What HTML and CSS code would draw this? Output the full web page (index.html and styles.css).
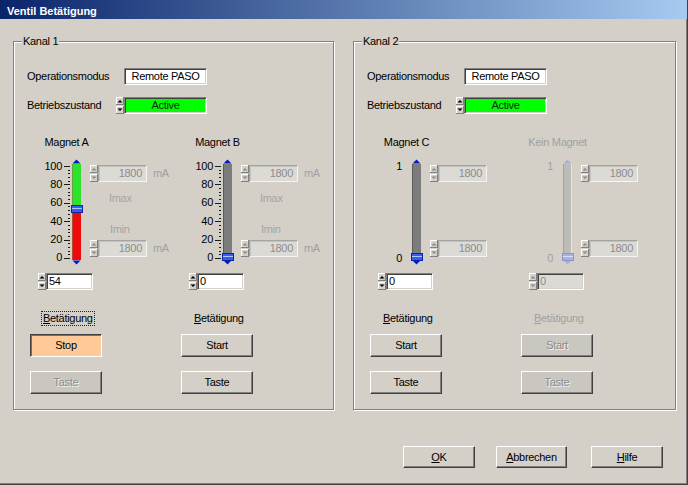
FILE: index.html
```html
<!DOCTYPE html>
<html lang="de">
<head>
<meta charset="utf-8">
<title>Ventil Betätigung</title>
<link rel="stylesheet" href="styles.css">
</head>
<body>
<svg class="defs" width="0" height="0" aria-hidden="true">
  <defs>
    <symbol id="spin" viewBox="0 0 8 17">
      <rect x="0" y="0" width="8" height="8" fill="#d4d0c8"/>
      <rect x="0" y="0" width="8" height="1" fill="#fff"/>
      <rect x="0" y="0" width="1" height="8" fill="#fff"/>
      <rect x="0" y="7" width="8" height="1" fill="#808080"/>
      <rect x="7" y="0" width="1" height="8" fill="#808080"/>
      <polygon points="1.5,5.5 6.5,5.5 4,3" fill="currentColor"/>
      <rect x="0" y="9" width="8" height="8" fill="#d4d0c8"/>
      <rect x="0" y="9" width="8" height="1" fill="#fff"/>
      <rect x="0" y="9" width="1" height="8" fill="#fff"/>
      <rect x="0" y="16" width="8" height="1" fill="#808080"/>
      <rect x="7" y="9" width="1" height="8" fill="#808080"/>
      <polygon points="1.5,11.5 6.5,11.5 4,14" fill="currentColor"/>
    </symbol>
    <symbol id="ticks" viewBox="0 0 21 112">
      <path d="M1 9.5h6M1 27.5h6M1 46.5h6M1 64.5h6M1 83.5h6M1 101.5h6M5 13.5h2M5 16.5h2M5 20.5h2M5 24.5h2M5 31.5h2M5 35.5h2M5 38.5h2M5 42.5h2M5 49.5h2M5 53.5h2M5 57.5h2M5 61.5h2M5 68.5h2M5 72.5h2M5 75.5h2M5 79.5h2M5 86.5h2M5 90.5h2M5 94.5h2M5 97.5h2" stroke="#1a1a1a" fill="none"/>
    </symbol>
  </defs>
</svg>

<div class="window">
  <div class="titlebar">Ventil Betätigung</div>

  <div class="content">
    <!-- Kanal 1 -->
    <div class="group">
      <span class="legend">Kanal 1</span>
      <div class="row r1">
        <span class="lbl">Operationsmodus</span>
        <div class="field box">Remote PASO</div>
      </div>
      <div class="row r2">
        <span class="lbl lbl2">Betriebszustand</span>
        <svg class="spin" width="8" height="17"><use href="#spin"/></svg>
        <div class="field box green">Active</div>
      </div>

      <div class="magnets">
        <div class="magnet">
          <div class="mtitle">Magnet A</div>
          <div class="slider">
            <div class="scale"><span>100</span><span>80</span><span>60</span><span>40</span><span>20</span><span>0</span></div>
            <svg class="track" width="21" height="112" viewBox="0 0 21 112">
              <use href="#ticks"/>
              <rect x="9" y="7" width="9" height="96" fill="#ee0a0a"/>
              <rect x="9" y="7" width="9" height="42" fill="#2ee32e"/>
              <rect x="9" y="7" width="1" height="96" fill="#8a7a4a" opacity=".6"/>
              <polygon points="13.5,2.5 9.5,6.5 17.5,6.5" fill="#0818c8"/>
              <polygon points="9.5,103.5 17.5,103.5 13.5,107.5" fill="#0818c8"/>
              <rect x="8" y="48" width="12" height="8" fill="#0a26a8"/>
              <rect x="9" y="49" width="10" height="6" fill="#3a5cee"/>
              <rect x="9" y="51" width="10" height="1" fill="#b0c4ff"/>
            </svg>
            <div class="limits">
              <div class="spinbox"><svg class="spin dis" width="8" height="17"><use href="#spin"/></svg><div class="lfield">1800</div><span class="unit">mA</span></div>
              <div class="imax">Imax</div>
              <div class="imin">Imin</div>
              <div class="spinbox low"><svg class="spin dis" width="8" height="17"><use href="#spin"/></svg><div class="lfield">1800</div><span class="unit">mA</span></div>
            </div>
          </div>
          <div class="valrow"><svg class="spin" width="8" height="17"><use href="#spin"/></svg><div class="field vfield">54</div></div>
          <div class="act"><span class="focus"><u>B</u>etätigung</span></div>
          <div class="btn pressed">Stop</div>
          <div class="btn dis second">Taste</div>
        </div>

        <div class="magnet">
          <div class="mtitle">Magnet B</div>
          <div class="slider">
            <div class="scale"><span>100</span><span>80</span><span>60</span><span>40</span><span>20</span><span>0</span></div>
            <svg class="track" width="21" height="112" viewBox="0 0 21 112">
              <use href="#ticks"/>
              <rect x="9" y="7" width="9" height="96" fill="#7c7c7c"/>
              <rect x="9" y="7" width="1" height="96" fill="#5a5a5a"/>
              <polygon points="13.5,2.5 9.5,6.5 17.5,6.5" fill="#0818c8"/>
              <polygon points="9.5,103.5 17.5,103.5 13.5,107.5" fill="#0818c8"/>
              <rect x="8" y="96" width="12" height="8" fill="#0a26a8"/>
              <rect x="9" y="97" width="10" height="6" fill="#3a5cee"/>
              <rect x="9" y="99" width="10" height="1" fill="#b0c4ff"/>
            </svg>
            <div class="limits">
              <div class="spinbox"><svg class="spin dis" width="8" height="17"><use href="#spin"/></svg><div class="lfield">1800</div><span class="unit">mA</span></div>
              <div class="imax">Imax</div>
              <div class="imin">Imin</div>
              <div class="spinbox low"><svg class="spin dis" width="8" height="17"><use href="#spin"/></svg><div class="lfield">1800</div><span class="unit">mA</span></div>
            </div>
          </div>
          <div class="valrow"><svg class="spin" width="8" height="17"><use href="#spin"/></svg><div class="field vfield">0</div></div>
          <div class="act"><span><u>B</u>etätigung</span></div>
          <div class="btn">Start</div>
          <div class="btn second">Taste</div>
        </div>
      </div>
    </div>

    <!-- Kanal 2 -->
    <div class="group g2">
      <span class="legend">Kanal 2</span>
      <div class="row r1">
        <span class="lbl">Operationsmodus</span>
        <div class="field box">Remote PASO</div>
      </div>
      <div class="row r2">
        <span class="lbl lbl2">Betriebszustand</span>
        <svg class="spin" width="8" height="17"><use href="#spin"/></svg>
        <div class="field box green">Active</div>
      </div>

      <div class="magnets">
        <div class="magnet">
          <div class="mtitle">Magnet C</div>
          <div class="slider">
            <div class="scale"><span>1</span><span>0</span></div>
            <svg class="track" width="21" height="112" viewBox="0 0 21 112">
              <rect x="9" y="7" width="9" height="96" fill="#7c7c7c"/>
              <rect x="9" y="7" width="1" height="96" fill="#5a5a5a"/>
              <polygon points="13.5,2.5 9.5,6.5 17.5,6.5" fill="#0818c8"/>
              <polygon points="9.5,103.5 17.5,103.5 13.5,107.5" fill="#0818c8"/>
              <rect x="8" y="96" width="12" height="8" fill="#0a26a8"/>
              <rect x="9" y="97" width="10" height="6" fill="#3a5cee"/>
              <rect x="9" y="99" width="10" height="1" fill="#b0c4ff"/>
            </svg>
            <div class="limits">
              <div class="spinbox"><svg class="spin dis" width="8" height="17"><use href="#spin"/></svg><div class="lfield">1800</div></div>
              <div class="lgap"></div>
              <div class="spinbox"><svg class="spin dis" width="8" height="17"><use href="#spin"/></svg><div class="lfield">1800</div></div>
            </div>
          </div>
          <div class="valrow"><svg class="spin" width="8" height="17"><use href="#spin"/></svg><div class="field vfield">0</div></div>
          <div class="act"><span><u>B</u>etätigung</span></div>
          <div class="btn">Start</div>
          <div class="btn second">Taste</div>
        </div>

        <div class="magnet off">
          <div class="mtitle">Kein Magnet</div>
          <div class="slider">
            <div class="scale"><span>1</span><span>0</span></div>
            <svg class="track" width="21" height="112" viewBox="0 0 21 112">
              <rect x="9" y="7" width="9" height="96" fill="#bdbcb8"/>
              <rect x="9" y="7" width="1" height="96" fill="#a2a2a2"/>
              <rect x="17" y="7" width="1" height="96" fill="#e6e6e6"/>
              <polygon points="13.5,2.5 9.5,6.5 17.5,6.5" fill="#a8b0d8"/>
              <polygon points="9.5,103.5 17.5,103.5 13.5,107.5" fill="#a8b0d8"/>
              <rect x="8" y="96" width="12" height="8" fill="#8c96c8"/>
              <rect x="9" y="97" width="10" height="6" fill="#a8b2e0"/>
              <rect x="9" y="99" width="10" height="1" fill="#dde4fa"/>
            </svg>
            <div class="limits">
              <div class="spinbox"><svg class="spin dis" width="8" height="17"><use href="#spin"/></svg><div class="lfield">1800</div></div>
              <div class="lgap"></div>
              <div class="spinbox"><svg class="spin dis" width="8" height="17"><use href="#spin"/></svg><div class="lfield">1800</div></div>
            </div>
          </div>
          <div class="valrow"><svg class="spin dis" width="8" height="17"><use href="#spin"/></svg><div class="field vfield disfield">0</div></div>
          <div class="act"><span><u>B</u>etätigung</span></div>
          <div class="btn dis">Start</div>
          <div class="btn dis second">Taste</div>
        </div>
      </div>
    </div>
  </div>

  <div class="footer">
    <div class="btn fbtn"><span><u>O</u>K</span></div>
    <div class="btn fbtn abb"><span><u>A</u>bbrechen</span></div>
    <div class="btn fbtn hilfe"><span><u>H</u>ilfe</span></div>
  </div>
</div>
</body>
</html>
```

FILE: styles.css
```css
* { box-sizing: border-box; }

html, body { margin: 0; padding: 0; }

body {
  width: 688px;
  height: 485px;
  overflow: hidden;
  background: #d4d0c8;
  color: #000;
  font-family: "Liberation Sans", Arial, sans-serif;
  font-size: 11px;
  line-height: 13px;
  letter-spacing: -0.3px;
}

.defs { display: block; width: 0; height: 0; overflow: hidden; }

.window {
  width: 688px;
  height: 485px;
  border-right: 1px solid #404040;
  border-bottom: 1px solid #404040;
  box-shadow: inset -1px -1px 0 #808080;
  display: flex;
  flex-direction: column;
}

.titlebar {
  height: 19px;
  flex: none;
  padding: 5px 0 0 7px;
  background: linear-gradient(to right, #0a246a, #a6caf0);
  color: #fff;
  font-weight: bold;
  letter-spacing: 0;
}

.content {
  display: flex;
  gap: 19px;
  padding: 22px 0 0 13px;
}

.group {
  position: relative;
  width: 321px;
  height: 369px;
  flex: none;
  border: 1px solid #808080;
  box-shadow: 1px 1px 0 #fff, inset 1px 1px 0 #fff;
}
.group.g2 { width: 323px; }

.legend {
  position: absolute;
  top: -7px;
  left: 8px;
  padding: 0 1px;
  background: #d4d0c8;
}

.row {
  display: flex;
  align-items: center;
  height: 17px;
  padding-left: 13px;
}
.row.r1 { margin-top: 26px; }
.row.r2 { margin-top: 12px; }
.lbl { width: 97px; }
.lbl2 { width: 89px; }

.field {
  height: 17px;
  border: 1px solid;
  border-color: #808080 #fff #fff #808080;
  box-shadow: inset 1px 1px 0 #404040, inset -1px -1px 0 #d4d0c8;
  background: #fff;
  line-height: 15px;
  white-space: nowrap;
}
.box { width: 83px; text-align: center; }
.green { background: #00ff00; color: #0a2a0a; }

.spin { display: block; flex: none; color: #000; }
.spin.dis { color: #8a8a8a; }

.magnets {
  display: flex;
  padding-left: 10px;
  margin-top: 21px;
}

.magnet {
  width: 151px;
  flex: none;
  display: flex;
  flex-direction: column;
}

.mtitle {
  width: 85px;
  height: 14px;
  line-height: 14px;
  text-align: center;
  white-space: nowrap;
}

.slider {
  display: flex;
  height: 112px;
  margin-top: 8px;
}

.scale {
  width: 39px;
  flex: none;
  display: flex;
  flex-direction: column;
  justify-content: space-between;
  text-align: right;
  padding: 2.5px 1px 4.5px 0;
}
.scale span { display: block; height: 13px; }

.track { display: block; flex: none; }

.limits {
  margin-left: 6px;
  padding-top: 8px;
  display: flex;
  flex-direction: column;
}

.spinbox {
  display: flex;
  align-items: center;
  height: 17px;
}
.spinbox.low { margin-top: 4px; }

.lfield {
  width: 49px;
  height: 17px;
  border: 1px solid;
  border-color: #a4a4a4 #f4f4f4 #f4f4f4 #a4a4a4;
  box-shadow: inset 1px 1px 0 #c4c2bc;
  background: #dcdad5;
  color: #8c8c8c;
  text-align: right;
  padding-right: 4px;
  line-height: 15px;
}

.unit {
  margin-left: 6px;
  color: #a0a0a0;
}

.imax, .imin {
  height: 13px;
  color: #a4a4a4;
}
.imax { margin-top: 10px; padding-left: 19px; }
.imin { margin-top: 18px; padding-left: 20px; }

.lgap { height: 58px; }

.valrow {
  display: flex;
  align-items: center;
  height: 17px;
  margin-top: 4px;
  padding-left: 14px;
}
.vfield {
  width: 47px;
  padding-left: 2px;
}
.disfield { background: #dcdad5; color: #8c8c8c; }

.act {
  margin-top: 21px;
  height: 15px;
  padding-left: 17px;
}
.act span {
  display: inline-block;
  border: 1px dotted transparent;
  padding: 0 1px;
  line-height: 13px;
}
.act span.focus { border-color: #222; }

.btn {
  width: 72px;
  height: 23px;
  margin: 8px 0 0 6px;
  display: flex;
  align-items: center;
  justify-content: center;
  background: #d4d0c8;
  border: 1px solid;
  border-color: #fff #404040 #404040 #fff;
  box-shadow: inset -1px -1px 0 #808080;
  flex: none;
}
.btn.second { margin-top: 14px; }

.btn.pressed {
  background: #ffca98;
  border-color: #404040 #fff #fff #404040;
  box-shadow: inset 1px 1px 0 #8a6a50;
}

.btn.dis {
  background: #cac7c1;
  color: #8c8c8c;
  text-shadow: 1px 1px 0 #f2f2f2;
}

.off .mtitle,
.off .scale,
.off .act {
  color: #a0a0a0;
}

.footer {
  display: flex;
  justify-content: flex-end;
  padding-right: 24px;
  margin-top: 36px;
}
.fbtn {
  margin: 0;
  height: 22px;
  width: 72px;
}
.fbtn.abb { width: 71px; margin-left: 21px; }
.fbtn.hilfe { margin-left: 24px; }
```
